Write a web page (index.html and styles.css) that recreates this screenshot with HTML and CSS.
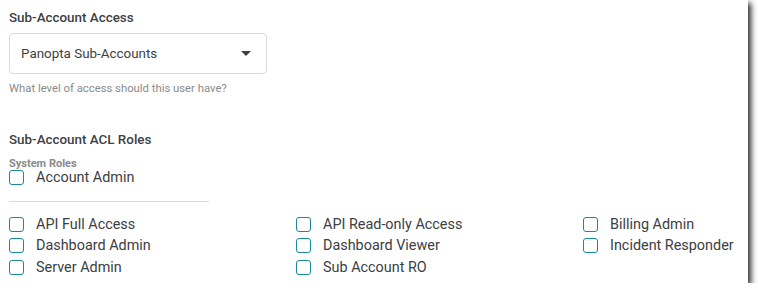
FILE: index.html
```html
<!DOCTYPE html>
<html lang="en">
  <head>
    <meta charset="UTF-8" />
    <meta name="viewport" content="width=device-width, initial-scale=1.0" />
    <title>Sub-Account Access</title>
    <link rel="stylesheet" href="styles.css">
  </head>
  <body>
    <main class="card">
      <div class="field">
        <div class="field__title">Sub-Account Access</div>
        <div class="select">
          <span class="select__value">Panopta Sub-Accounts</span>
          <span class="select__caret"></span>
        </div>
        <div class="field__help">What level of access should this user have?</div>
      </div>
      <div class="field field--roles">
        <div class="field__title">Sub-Account ACL Roles</div>
        <div class="roles__group">System Roles</div>
        <label class="check">
          <span class="check__box"></span>
          <span class="check__label">Account Admin</span>
        </label>
        <hr class="divider" />
        <div class="roles">
          <label class="check"><span class="check__box"></span><span class="check__label">API Full Access</span></label>
          <label class="check"><span class="check__box"></span><span class="check__label">API Read-only Access</span></label>
          <label class="check"><span class="check__box"></span><span class="check__label">Billing Admin</span></label>
          <label class="check"><span class="check__box"></span><span class="check__label">Dashboard Admin</span></label>
          <label class="check"><span class="check__box"></span><span class="check__label">Dashboard Viewer</span></label>
          <label class="check"><span class="check__box"></span><span class="check__label">Incident Responder</span></label>
          <label class="check"><span class="check__box"></span><span class="check__label">Server Admin</span></label>
          <label class="check"><span class="check__box"></span><span class="check__label">Sub Account RO</span></label>
        </div>
      </div>
    </main>
  </body>
</html>
```

FILE: styles.css
```css
html,
body {
  margin: 0;
  background: #fff;
}
body {
  font-family: Roboto, "Liberation Sans", sans-serif;
  color: #3c4043;
}
.card {
  width: 748px;
  height: 283px;
  box-sizing: border-box;
  padding: 9px 9px 0;
  background: #fff;
  box-shadow: 3px 3px 6px rgba(0, 0, 0, 0.85);
  overflow: hidden;
}
.field__title {
  font-size: 13.4px;
  font-weight: 500;
  line-height: 17px;
  margin-bottom: 7px;
}
.select {
  width: 258px;
  height: 41px;
  box-sizing: border-box;
  border: 1px solid #dcdcdc;
  border-radius: 4px;
  display: flex;
  align-items: center;
  justify-content: space-between;
  padding: 0 15px 0 11px;
}
.select__value {
  font-size: 13.4px;
}
.select__caret {
  width: 0;
  height: 0;
  border-left: 5px solid transparent;
  border-right: 5px solid transparent;
  border-top: 5px solid #3c4043;
}
.field__help {
  font-size: 11.3px;
  color: #8a8a8a;
  margin-top: 8px;
  line-height: 14px;
}
.field--roles {
  margin-top: 35px;
}
.field--roles .field__title {
  margin-bottom: 12px;
}
.roles__group {
  font-size: 11px;
  font-weight: 700;
  color: #8a8a8a;
  line-height: 7px;
}
.check {
  display: flex;
  align-items: center;
  gap: 12px;
  height: 21.5px;
  font-size: 14.4px;
}
.check__box {
  flex: 0 0 15px;
  height: 15px;
  box-sizing: border-box;
  border: 1.5px solid #1a8a9a;
  border-radius: 3px;
}
.divider {
  width: 200px;
  margin: 12px 0 12px;
  border: 0;
  border-top: 1px solid #dcdcdc;
}
.roles {
  display: grid;
  grid-template-columns: 287px 287px 1fr;
}
```
